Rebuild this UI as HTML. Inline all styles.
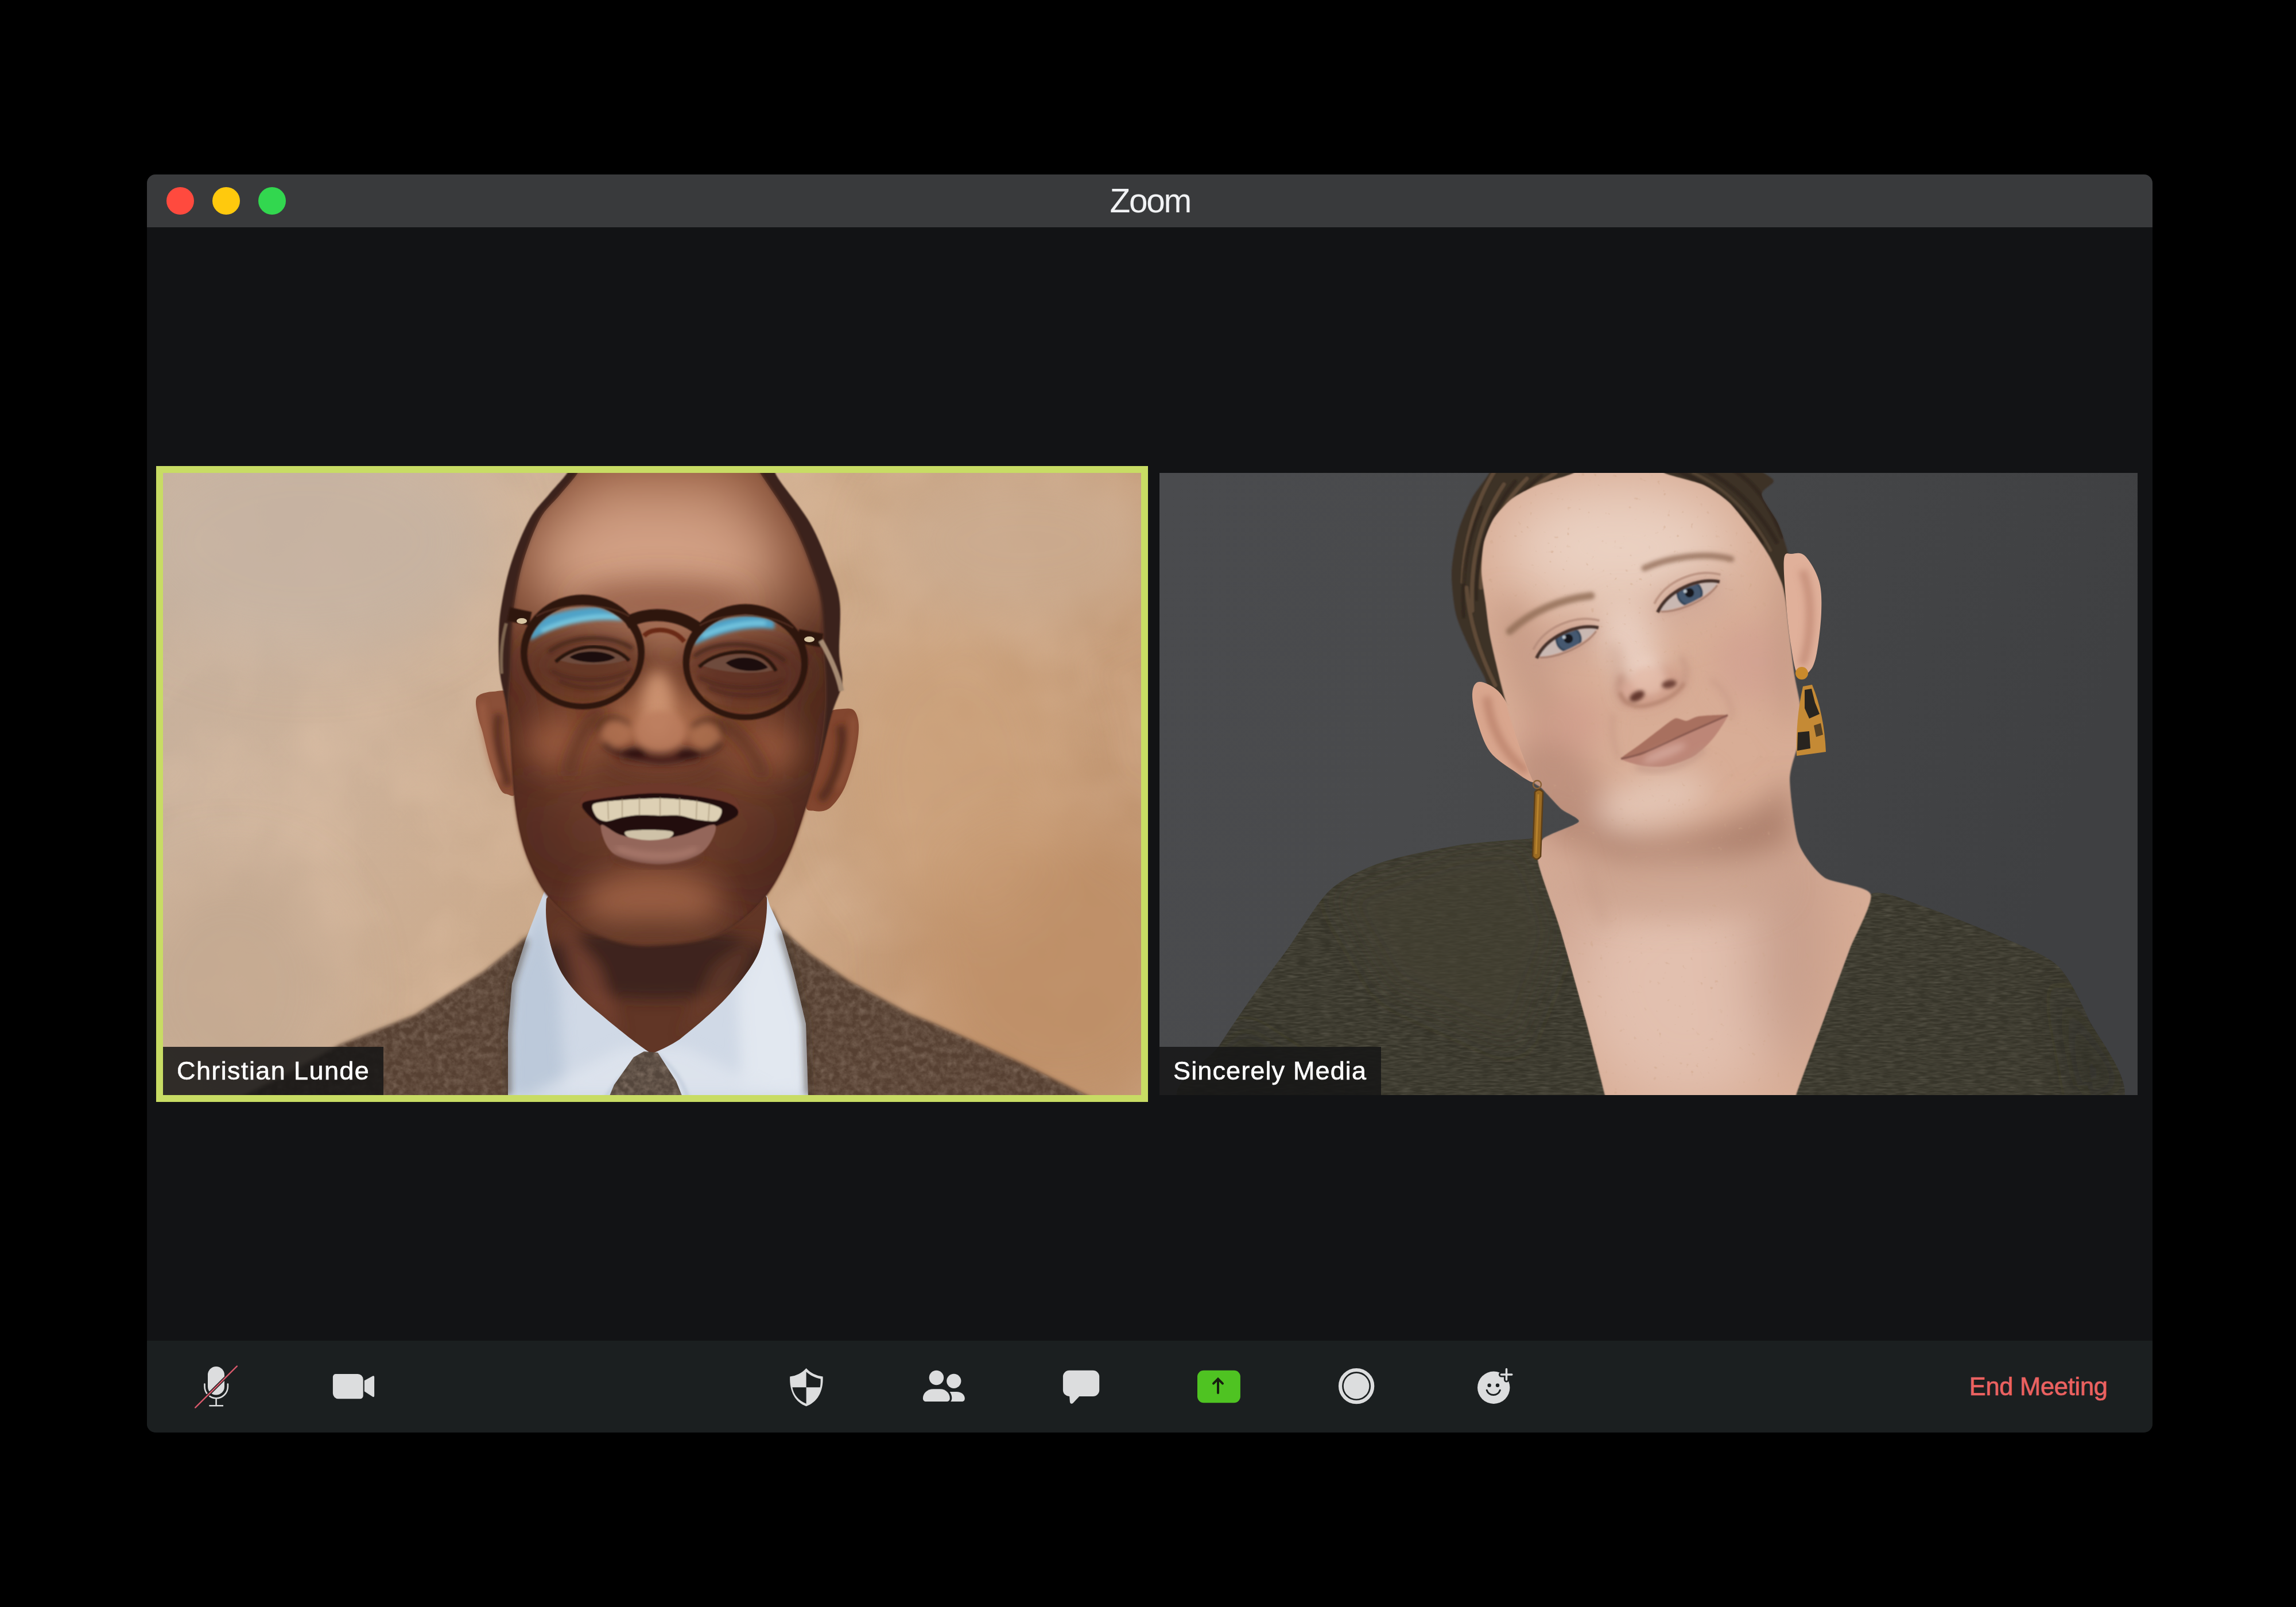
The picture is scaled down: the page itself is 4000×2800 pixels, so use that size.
<!DOCTYPE html>
<html lang="en">
<head>
<meta charset="utf-8">
<title>Zoom</title>
<style>
html,body{margin:0;padding:0;background:#000;}
body{width:4000px;height:2800px;position:relative;overflow:hidden;font-family:"Liberation Sans",sans-serif;}
.win{position:absolute;left:256px;top:304px;width:3494px;height:2192px;background:#121315;border-radius:15px;overflow:hidden;}
.titlebar{position:absolute;left:0;top:0;width:100%;height:92px;background:#393a3c;}
.tl{position:absolute;top:22px;width:48px;height:48px;border-radius:50%;}
.tl.r{left:34px;background:#ff4a3e;}
.tl.y{left:114px;background:#ffc90d;}
.tl.g{left:194px;background:#32d74f;}
.title{position:absolute;left:0;right:0;top:0;height:92px;line-height:92px;text-align:center;color:#f1f2f4;font-size:58.5px;}
.title span{position:absolute;left:1677.5px;top:0px;white-space:nowrap;letter-spacing:-2.3px;}
.tile{position:absolute;overflow:hidden;}
#t1{left:16px;top:508px;width:1704px;height:1084px;border:12px solid #c8dc64;}
#t2{left:1764px;top:520px;width:1704px;height:1084px;}
.tile svg{position:absolute;left:0;top:0;display:block;}
.name{position:absolute;left:0;bottom:0;height:84px;background:rgba(22,22,22,0.86);color:#fff;font-size:45px;line-height:84px;white-space:nowrap;-webkit-text-stroke:0.6px #fff;}
.name span{position:absolute;top:0;left:24px;}
#n1{width:384px;letter-spacing:1.4px;}
#n2{width:386px;letter-spacing:1.13px;}
.toolbar{position:absolute;left:0;top:2032px;width:100%;height:160px;background:#1b1f20;}
.toolbar svg{position:absolute;left:0;top:0;}
.end{position:absolute;top:0;height:160px;line-height:160px;color:#ea6262;font-size:43.5px;letter-spacing:-0.3px;white-space:nowrap;-webkit-text-stroke:0.6px #ea6262;}
</style>
</head>
<body>
<div class="win">
  <div class="titlebar">
    <div class="tl r"></div><div class="tl y"></div><div class="tl g"></div>
    <div class="title"><span id="ztitle">Zoom</span></div>
  </div>

  <div class="tile" id="t1">
    <!--PHOTO1--><svg width="1704" height="1084" viewBox="0 0 1704 1084">
<defs>
<linearGradient id="p1bg" x1="0" y1="0" x2="1" y2="0.35">
<stop offset="0" stop-color="#c5b09d"/><stop offset="0.3" stop-color="#cdb29a"/><stop offset="0.62" stop-color="#cba888"/><stop offset="1" stop-color="#c39874"/>
</linearGradient>
<filter id="b6" x="-20%" y="-20%" width="140%" height="140%"><feGaussianBlur stdDeviation="6"/></filter>
<filter id="b3" x="-20%" y="-20%" width="140%" height="140%"><feGaussianBlur stdDeviation="3"/></filter>
<filter id="b12" x="-30%" y="-30%" width="160%" height="160%"><feGaussianBlur stdDeviation="12"/></filter>
<filter id="b25" x="-50%" y="-50%" width="200%" height="200%"><feGaussianBlur stdDeviation="25"/></filter>
<filter id="b50" x="-50%" y="-50%" width="200%" height="200%"><feGaussianBlur stdDeviation="50"/></filter>
<filter id="b1" x="-5%" y="-5%" width="110%" height="110%"><feGaussianBlur stdDeviation="1.2"/></filter>
<filter id="tweed" x="0" y="0" width="100%" height="100%"><feTurbulence type="fractalNoise" baseFrequency="0.09" numOctaves="3" seed="4" result="n"/><feColorMatrix in="n" type="matrix" values="0 0 0 0 0.5  0 0 0 0 0.39  0 0 0 0 0.31  0.9 0.9 0.9 0 -1.05"/><feComposite in2="SourceGraphic" operator="in"/></filter>
<filter id="wall" x="0" y="0" width="100%" height="100%"><feTurbulence type="fractalNoise" baseFrequency="0.006" numOctaves="3" seed="11" result="n"/><feColorMatrix in="n" type="matrix" values="0 0 0 0 0.86  0 0 0 0 0.62  0 0 0 0 0.45  1.2 1.2 0 0 -0.95"/></filter>
<clipPath id="p1face"><path d="M800.0 -90.0 C759.0 -78.3 747.3 -35.7 734.0 -20.0 C720.7 -4.3 727.3 -6.0 720.0 4.0 C712.7 14.0 700.5 27.3 690.0 40.0 C679.5 52.7 667.3 61.2 657.0 80.0 C646.7 98.8 635.3 129.2 628.0 153.0 C620.7 176.8 616.3 202.0 613.0 223.0 C609.7 244.0 609.2 258.2 608.0 279.0 C606.8 299.8 606.8 327.8 606.0 348.0 C605.2 368.2 603.0 382.5 603.0 400.0 C603.0 417.5 604.5 426.8 606.0 453.0 C607.5 479.2 609.2 527.8 612.0 557.0 C614.8 586.2 618.3 607.3 623.0 628.0 C627.7 648.7 632.5 663.5 640.0 681.0 C647.5 698.5 656.3 717.3 668.0 733.0 C679.7 748.7 697.2 764.0 710.0 775.0 C722.8 786.0 727.8 791.3 745.0 799.0 C762.2 806.7 790.0 817.3 813.0 821.0 C836.0 824.7 859.7 823.0 883.0 821.0 C906.3 819.0 932.8 815.7 953.0 809.0 C973.2 802.3 987.3 793.8 1004.0 781.0 C1020.7 768.2 1038.5 751.7 1053.0 732.0 C1067.5 712.3 1080.0 687.8 1091.0 663.0 C1102.0 638.2 1110.7 610.2 1119.0 583.0 C1127.3 555.8 1135.5 527.2 1141.0 500.0 C1146.5 472.8 1150.0 442.3 1152.0 420.0 C1154.0 397.7 1153.3 383.8 1153.0 366.0 C1152.7 348.2 1151.2 336.3 1150.0 313.0 C1148.8 289.7 1149.3 250.3 1146.0 226.0 C1142.7 201.7 1138.3 190.2 1130.0 167.0 C1121.7 143.8 1111.0 114.8 1096.0 87.0 C1081.0 59.2 1051.3 17.8 1040.0 0.0 C1028.7 -17.8 1038.0 -5.0 1028.0 -20.0 C1018.0 -35.0 1018.0 -78.3 980.0 -90.0 C942.0 -101.7 841.0 -101.7 800.0 -90.0 Z"/></clipPath>
<clipPath id="p1shirt"><path d="M664.0 730.0 L632.0 813.0 L608.0 890.0 L601.0 977.0 L601.0 1090.0 L1124.0 1090.0 L1120.0 960.0 L1099.0 872.0 L1078.0 799.0 L1057.0 754.0 L1050.0 730.0 Z"/></clipPath>
<clipPath id="p1neck"><path d="M700 700 L668 742 C664 780 672 830 695 872 C715 905 740 925 761 942 C800 975 830 998 848 1010 L856 1010 C870 1004 885 997 900 987 C940 955 968 930 988 907 C1015 875 1035 850 1043 820 C1050 790 1053 765 1052 740 L1020 700 Z"/></clipPath>
<clipPath id="p1ll"><ellipse cx="731" cy="315" rx="98" ry="84"/></clipPath>
<clipPath id="p1rl"><ellipse cx="1014.6" cy="332" rx="99" ry="85"/></clipPath>
</defs>
<rect width="1704" height="1084" fill="url(#p1bg)"/>
<rect width="1704" height="1084" filter="url(#wall)" opacity="0.35"/>
<g filter="url(#b50)">
<ellipse cx="250" cy="120" rx="320" ry="200" fill="#c6b3a3" opacity="0.8"/>
<ellipse cx="1560" cy="860" rx="260" ry="260" fill="#bd8d66" opacity="0.8"/>
<ellipse cx="1380" cy="520" rx="200" ry="260" fill="#cda27c" opacity="0.6"/>
<ellipse cx="120" cy="900" rx="200" ry="220" fill="#c2a68f" opacity="0.7"/>
<ellipse cx="1500" cy="120" rx="240" ry="140" fill="#ccae94" opacity="0.7"/>
</g>
<g>
<path id="p1jk" d="M120.0 1096.0 L230.0 1040.0 L309.0 996.0 L440.0 944.0 L560.0 868.0 L635.0 808.0 L650.0 790.0 L700.0 900.0 L700.0 1090.0 Z M1060.0 760.0 L1078.0 796.0 L1127.0 838.0 L1197.0 886.0 L1300.0 942.0 L1342.0 959.0 L1493.0 1027.0 L1620.0 1090.0 L1000.0 1090.0 L1000.0 900.0 Z" fill="#563f30" filter="url(#b3)"/>
<path d="M120.0 1096.0 L230.0 1040.0 L309.0 996.0 L440.0 944.0 L560.0 868.0 L635.0 808.0 L650.0 790.0 L700.0 900.0 L700.0 1090.0 Z M1060.0 760.0 L1078.0 796.0 L1127.0 838.0 L1197.0 886.0 L1300.0 942.0 L1342.0 959.0 L1493.0 1027.0 L1620.0 1090.0 L1000.0 1090.0 L1000.0 900.0 Z" fill="#fff" filter="url(#tweed)" opacity="0.32"/>
</g>
<path d="M664.0 730.0 L632.0 813.0 L608.0 890.0 L601.0 977.0 L601.0 1090.0 L1124.0 1090.0 L1120.0 960.0 L1099.0 872.0 L1078.0 799.0 L1057.0 754.0 L1050.0 730.0 Z" fill="#d0d9e6"/>
<g clip-path="url(#p1shirt)"><g filter="url(#b12)"><path d="M660 740 L608 890 L601 1084 L700 1084 L690 900 Z" fill="#b9c6d8" opacity="0.9"/><path d="M1054 740 L1120 960 L1124 1084 L1010 1084 L1000 900 Z" fill="#e3e9f1" opacity="0.9"/><path d="M640 1084 L800 1000 L910 1000 L1080 1084 Z" fill="#dfe5ee" opacity="0.8"/></g></g>
<g filter="url(#b3)" fill="none" stroke="#aab8cc" stroke-width="4" opacity="0.7"><path d="M845 1012 C810 1040 790 1060 770 1090"/><path d="M858 1012 C890 1035 905 1060 915 1090"/></g>
<g filter="url(#b6)"><path d="M632 813 L608 890 L601 977 L601 1084" stroke="#3f3127" stroke-width="10" fill="none" opacity="0.6"/><path d="M1078 799 L1099 872 L1120 960 L1124 1084" stroke="#3f3127" stroke-width="10" fill="none" opacity="0.6"/></g>
<path d="M700 700 L668 742 C664 780 672 830 695 872 C715 905 740 925 761 942 C800 975 830 998 848 1010 L856 1010 C870 1004 885 997 900 987 C940 955 968 930 988 907 C1015 875 1035 850 1043 820 C1050 790 1053 765 1052 740 L1020 700 Z" fill="#613626"/>
<g clip-path="url(#p1neck)"><g filter="url(#b12)"><ellipse cx="860" cy="855" rx="215" ry="62" fill="#3b2320" opacity="0.95"/><path d="M690 780 L720 900 L800 980 L760 860 Z" fill="#7b4632" opacity="0.8"/><path d="M1040 800 L990 900 L900 985 L960 860 Z" fill="#6f3f2e" opacity="0.6"/></g></g>
<path d="M838.0 1008.0 L862.0 1010.0 L894.0 1060.0 L906.0 1090.0 L776.0 1090.0 L786.0 1066.0 L820.0 1018.0 Z" fill="#54463c"/>
<path d="M838.0 1008.0 L862.0 1010.0 L894.0 1060.0 L906.0 1090.0 L776.0 1090.0 L786.0 1066.0 L820.0 1018.0 Z" fill="#fff" filter="url(#tweed)" opacity="0.4"/>
<path d="M603.0 385.0 C597.8 375.2 583.7 380.7 575.0 381.0 C566.3 381.3 556.0 383.8 551.0 387.0 C546.0 390.2 545.2 392.8 545.0 400.0 C544.8 407.2 548.0 421.2 550.0 430.0 C552.0 438.8 553.7 440.5 557.0 453.0 C560.3 465.5 565.0 488.8 570.0 505.0 C575.0 521.2 582.0 540.8 587.0 550.0 C592.0 559.2 595.5 558.8 600.0 560.0 C604.5 561.2 612.3 567.0 614.0 557.0 C615.7 547.0 611.3 519.5 610.0 500.0 C608.7 480.5 607.2 459.2 606.0 440.0 C604.8 420.8 608.2 394.8 603.0 385.0 Z" fill="#8a4f38"/>
<path d="M1160.0 418.0 C1165.5 411.5 1177.7 411.7 1185.0 411.0 C1192.3 410.3 1199.5 409.3 1204.0 414.0 C1208.5 418.7 1211.3 428.0 1212.0 439.0 C1212.7 450.0 1210.5 466.2 1208.0 480.0 C1205.5 493.8 1201.2 509.2 1197.0 522.0 C1192.8 534.8 1189.2 546.5 1183.0 557.0 C1176.8 567.5 1168.0 579.7 1160.0 585.0 C1152.0 590.3 1141.7 590.2 1135.0 589.0 C1128.3 587.8 1119.5 591.2 1120.0 578.0 C1120.5 564.8 1132.7 531.3 1138.0 510.0 C1143.3 488.7 1148.3 465.3 1152.0 450.0 C1155.7 434.7 1154.5 424.5 1160.0 418.0 Z" fill="#82462f"/>
<g filter="url(#b6)"><path d="M585 420 C578 460 590 510 602 545" stroke="#4e261c" stroke-width="14" fill="none" opacity="0.8"/><path d="M1180 440 C1190 480 1170 540 1145 570" stroke="#4a241b" stroke-width="16" fill="none" opacity="0.8"/><path d="M556 400 C556 440 568 490 584 535" stroke="#a9674a" stroke-width="8" fill="none" opacity="0.8"/><path d="M1202 425 C1206 460 1196 510 1175 550" stroke="#9b5b40" stroke-width="8" fill="none" opacity="0.7"/></g>
<path d="M780.0 -90.0 C732.7 -78.3 728.8 -35.3 716.0 -20.0 C703.2 -4.7 710.3 -7.7 703.0 2.0 C695.7 11.7 682.7 25.0 672.0 38.0 C661.3 51.0 649.7 60.8 639.0 80.0 C628.3 99.2 616.0 129.2 608.0 153.0 C600.0 176.8 594.8 202.0 591.0 223.0 C587.2 244.0 585.7 258.2 585.0 279.0 C584.3 299.8 585.0 327.8 587.0 348.0 C589.0 368.2 594.2 382.5 597.0 400.0 C599.8 417.5 601.7 426.8 604.0 453.0 C606.3 479.2 608.0 527.8 611.0 557.0 C614.0 586.2 617.3 607.3 622.0 628.0 C626.7 648.7 631.5 663.5 639.0 681.0 C646.5 698.5 655.3 717.3 667.0 733.0 C678.7 748.7 696.2 764.0 709.0 775.0 C721.8 786.0 726.7 791.2 744.0 799.0 C761.3 806.8 789.8 818.2 813.0 822.0 C836.2 825.8 859.7 824.0 883.0 822.0 C906.3 820.0 932.7 816.7 953.0 810.0 C973.3 803.3 988.2 794.8 1005.0 782.0 C1021.8 769.2 1039.5 752.8 1054.0 733.0 C1068.5 713.2 1081.0 688.0 1092.0 663.0 C1103.0 638.0 1111.2 610.2 1120.0 583.0 C1128.8 555.8 1137.5 527.2 1145.0 500.0 C1152.5 472.8 1158.7 442.3 1165.0 420.0 C1171.3 397.7 1180.8 383.8 1183.0 366.0 C1185.2 348.2 1178.7 336.3 1178.0 313.0 C1177.3 289.7 1181.7 250.3 1179.0 226.0 C1176.3 201.7 1170.7 190.2 1162.0 167.0 C1153.3 143.8 1142.0 113.2 1127.0 87.0 C1112.0 60.8 1083.5 27.8 1072.0 10.0 C1060.5 -7.8 1070.0 -3.3 1058.0 -20.0 C1046.0 -36.7 1046.3 -78.3 1000.0 -90.0 C953.7 -101.7 827.3 -101.7 780.0 -90.0 Z" fill="#3b241b" filter="url(#b1)"/>
<path d="M800.0 -90.0 C759.0 -78.3 747.3 -35.7 734.0 -20.0 C720.7 -4.3 727.3 -6.0 720.0 4.0 C712.7 14.0 700.5 27.3 690.0 40.0 C679.5 52.7 667.3 61.2 657.0 80.0 C646.7 98.8 635.3 129.2 628.0 153.0 C620.7 176.8 616.3 202.0 613.0 223.0 C609.7 244.0 609.2 258.2 608.0 279.0 C606.8 299.8 606.8 327.8 606.0 348.0 C605.2 368.2 603.0 382.5 603.0 400.0 C603.0 417.5 604.5 426.8 606.0 453.0 C607.5 479.2 609.2 527.8 612.0 557.0 C614.8 586.2 618.3 607.3 623.0 628.0 C627.7 648.7 632.5 663.5 640.0 681.0 C647.5 698.5 656.3 717.3 668.0 733.0 C679.7 748.7 697.2 764.0 710.0 775.0 C722.8 786.0 727.8 791.3 745.0 799.0 C762.2 806.7 790.0 817.3 813.0 821.0 C836.0 824.7 859.7 823.0 883.0 821.0 C906.3 819.0 932.8 815.7 953.0 809.0 C973.2 802.3 987.3 793.8 1004.0 781.0 C1020.7 768.2 1038.5 751.7 1053.0 732.0 C1067.5 712.3 1080.0 687.8 1091.0 663.0 C1102.0 638.2 1110.7 610.2 1119.0 583.0 C1127.3 555.8 1135.5 527.2 1141.0 500.0 C1146.5 472.8 1150.0 442.3 1152.0 420.0 C1154.0 397.7 1153.3 383.8 1153.0 366.0 C1152.7 348.2 1151.2 336.3 1150.0 313.0 C1148.8 289.7 1149.3 250.3 1146.0 226.0 C1142.7 201.7 1138.3 190.2 1130.0 167.0 C1121.7 143.8 1111.0 114.8 1096.0 87.0 C1081.0 59.2 1051.3 17.8 1040.0 0.0 C1028.7 -17.8 1038.0 -5.0 1028.0 -20.0 C1018.0 -35.0 1018.0 -78.3 980.0 -90.0 C942.0 -101.7 841.0 -101.7 800.0 -90.0 Z" fill="#7a452e" filter="url(#b3)"/>
<g clip-path="url(#p1face)">
<g filter="url(#b50)">
<ellipse cx="860" cy="150" rx="230" ry="130" fill="#cf9c80"/><ellipse cx="850" cy="140" rx="120" ry="70" fill="#d2a085"/>
<ellipse cx="880" cy="0" rx="200" ry="40" fill="#a56a4c"/>
<ellipse cx="600" cy="520" rx="60" ry="260" fill="#4f281d"/>
<ellipse cx="1150" cy="500" rx="70" ry="280" fill="#4a251b"/>
<ellipse cx="700" cy="680" rx="90" ry="120" fill="#4f281d" opacity="0.95"/>
<ellipse cx="1040" cy="690" rx="90" ry="120" fill="#4a241a" opacity="0.95"/><ellipse cx="866" cy="600" rx="220" ry="120" fill="#6a3a28" opacity="0.7"/>
</g>
<g filter="url(#b25)">
<ellipse cx="735" cy="335" rx="110" ry="60" fill="#5e3024" opacity="0.75"/>
<ellipse cx="1015" cy="350" rx="110" ry="60" fill="#5a2d22" opacity="0.75"/>
<ellipse cx="868" cy="225" rx="150" ry="40" fill="#8a513a" opacity="0.7"/>
<ellipse cx="866" cy="440" rx="95" ry="60" fill="#a86a4b"/>
<ellipse cx="690" cy="470" rx="60" ry="45" fill="#98593f" opacity="0.9"/>
<ellipse cx="1050" cy="480" rx="60" ry="45" fill="#94553c" opacity="0.9"/>
<ellipse cx="850" cy="745" rx="120" ry="45" fill="#9c6044" opacity="0.95"/>
<ellipse cx="866" cy="520" rx="120" ry="22" fill="#5b2d22" opacity="0.8"/>
<ellipse cx="860" cy="800" rx="170" ry="22" fill="#4a2a22" opacity="0.8"/>
</g>
<g filter="url(#b12)">
<ellipse cx="862" cy="405" rx="28" ry="60" fill="#cf9674" opacity="0.9"/>
<ellipse cx="866" cy="492" rx="80" ry="12" fill="#3f1d17" opacity="0.8"/>
<path d="M765 411 C735 440 712 480 706 528" stroke="#4d261d" stroke-width="16" fill="none" opacity="0.8"/>
<path d="M970 428 C1005 455 1035 490 1046 530" stroke="#4a241b" stroke-width="16" fill="none" opacity="0.8"/>
</g>
</g>
<g filter="url(#b6)">
<path d="M760 452 C756 425 790 418 812 440" stroke="#4e271d" stroke-width="9" fill="none" opacity="0.75"/>
<path d="M974 458 C980 430 944 420 922 444" stroke="#4e271d" stroke-width="9" fill="none" opacity="0.75"/>
<ellipse cx="790" cy="455" rx="26" ry="22" fill="#b07252" opacity="0.8"/>
<ellipse cx="945" cy="460" rx="26" ry="22" fill="#ad6f50" opacity="0.8"/>
<ellipse cx="866" cy="450" rx="44" ry="36" fill="#bb7d5d" opacity="0.85"/>
<path d="M768 470 C790 496 826 492 846 498 C866 504 890 500 910 494 C940 488 962 486 972 468" stroke="#3a1a15" stroke-width="10" fill="none" opacity="0.85"/>
<ellipse cx="822" cy="488" rx="20" ry="8" fill="#2a110e" opacity="0.9"/>
<ellipse cx="915" cy="490" rx="20" ry="8" fill="#2a110e" opacity="0.9"/>
</g>
<g filter="url(#b1)">
<path d="M727.0 580.0 C724.0 576.7 729.8 561.7 742.0 556.0 C754.2 550.3 779.3 548.5 800.0 546.0 C820.7 543.5 844.3 540.7 866.0 541.0 C887.7 541.3 909.7 544.8 930.0 548.0 C950.3 551.2 975.5 552.3 988.0 560.0 C1000.5 567.7 1007.2 589.8 1005.0 594.0 C1002.8 598.2 987.5 588.2 975.0 585.0 C962.5 581.8 948.2 577.8 930.0 575.0 C911.8 572.2 887.7 568.5 866.0 568.0 C844.3 567.5 817.7 570.7 800.0 572.0 C782.3 573.3 772.2 574.7 760.0 576.0 C747.8 577.3 730.0 583.3 727.0 580.0 Z" fill="#6d382c"/>
<path d="M730.0 580.0 C729.5 572.2 737.3 571.7 760.0 568.0 C782.7 564.3 830.2 557.3 866.0 558.0 C901.8 558.7 952.3 566.0 975.0 572.0 C997.7 578.0 1004.2 586.7 1002.0 594.0 C999.8 601.3 978.2 609.7 962.0 616.0 C945.8 622.3 924.0 628.0 905.0 632.0 C886.0 636.0 865.8 640.0 848.0 640.0 C830.2 640.0 812.2 636.2 798.0 632.0 C783.8 627.8 774.3 623.7 763.0 615.0 C751.7 606.3 730.5 587.8 730.0 580.0 Z" fill="#241010"/>
<path d="M750.0 577.0 C756.0 573.1 784.5 571.3 800.0 570.0 C815.5 568.7 848.7 566.7 866.0 567.0 C883.3 567.3 915.9 569.6 930.0 572.0 C944.1 574.4 967.5 580.5 972.0 585.0 C976.5 589.5 969.6 603.5 964.0 606.0 C958.4 608.5 938.5 605.2 930.0 604.0 C921.5 602.8 908.5 597.9 900.0 597.0 C891.5 596.1 875.3 597.1 866.0 597.0 C856.7 596.9 838.8 595.6 830.0 596.0 C821.2 596.4 807.7 598.5 800.0 600.0 C792.3 601.5 778.0 607.1 772.0 607.0 C766.0 606.9 757.9 603.0 755.0 599.0 C752.1 595.0 744.0 580.9 750.0 577.0 Z" fill="#ddd0b4"/>
<path d="M806.0 625.0 C811.2 622.5 832.5 622.0 846.0 622.0 C859.5 622.0 881.3 622.5 887.0 625.0 C892.7 627.5 886.5 634.2 880.0 637.0 C873.5 639.8 858.8 642.0 848.0 642.0 C837.2 642.0 822.0 639.8 815.0 637.0 C808.0 634.2 800.8 627.5 806.0 625.0 Z" fill="#cfc2a8"/>
<path d="M763.0 614.0 C765.0 608.5 783.8 626.7 798.0 631.0 C812.2 635.3 830.2 640.0 848.0 640.0 C865.8 640.0 886.0 635.3 905.0 631.0 C924.0 626.7 956.5 608.8 962.0 614.0 C967.5 619.2 954.0 650.7 938.0 662.0 C922.0 673.3 891.3 681.7 866.0 682.0 C840.7 682.3 803.2 675.3 786.0 664.0 C768.8 652.7 761.0 619.5 763.0 614.0 Z" fill="#94665a"/>
<g stroke="#9c8a6e" stroke-width="1.6" fill="none" opacity="0.8"><path d="M775 571 L776 604 M800 568 L800 600 M830 566 L830 597 M866 565 L866 598 M900 566 L900 598 M930 570 L929 603 M952 576 L950 606"/></g>
</g>
<g filter="url(#b6)"><path d="M790 655 C840 672 900 672 930 655" stroke="#b58375" stroke-width="10" fill="none" opacity="0.7"/><path d="M786 668 C840 692 900 690 938 668" stroke="#5a3127" stroke-width="9" fill="none" opacity="0.7"/></g>
<g filter="url(#b1)">
<path d="M690 326 C706 314 730 306 752 307 C778 308 796 316 806 326 C790 332 770 334 748 334 C722 334 704 331 690 326 Z" fill="#6e4c3d"/>
<path d="M708 321 C724 308 770 307 788 322 C772 333 726 333 708 321 Z" fill="#1f100d"/>
<path d="M684 329 C704 311 730 302 752 303 C780 304 800 314 812 327" stroke="#2a140f" stroke-width="6" fill="none"/>
<path d="M940 336 C958 323 985 315 1012 316 C1036 317 1052 327 1062 344 C1046 348 1026 349 1004 348 C978 346 958 342 940 336 Z" fill="#6e4c3d"/>
<path d="M980 331 C998 317 1038 318 1054 339 C1036 349 998 347 980 331 Z" fill="#1f100d"/>
<path d="M934 338 C954 319 985 311 1012 312 C1040 313 1058 325 1068 345" stroke="#2a140f" stroke-width="6" fill="none"/>
</g>
<g filter="url(#b3)">
<path d="M672 312 C710 282 780 280 818 306" stroke="#3d1d16" stroke-width="6" fill="none" opacity="0.85"/>
<path d="M925 320 C960 290 1040 290 1084 328" stroke="#3d1d16" stroke-width="6" fill="none" opacity="0.85"/>
<path d="M676 344 C710 366 780 366 816 344 M690 362 C725 380 775 378 806 360" stroke="#47231a" stroke-width="5" fill="none" opacity="0.75"/>
<path d="M934 356 C975 378 1040 380 1080 362 M950 374 C990 392 1040 392 1074 378" stroke="#47231a" stroke-width="5" fill="none" opacity="0.75"/>
</g>
<g filter="url(#b3)"><g clip-path="url(#p1ll)"><path d="M640 292 C690 262 760 248 830 262 L830 240 C760 226 690 236 640 262 Z" fill="#4fa3c8"/><path d="M660 276 C700 256 760 246 800 252" stroke="#7fd0e6" stroke-width="8" fill="none" opacity="0.8"/></g>
<g clip-path="url(#p1rl)"><path d="M925 300 C970 278 1020 266 1065 272 L1065 250 C1020 244 970 252 925 274 Z" fill="#4fa3c8"/><path d="M940 284 C980 266 1020 260 1050 262" stroke="#7fd0e6" stroke-width="7" fill="none" opacity="0.8"/></g></g>
<g filter="url(#b1)">
<path fill="#2e1610" fill-rule="evenodd" d="M623 312 a108 100 0 1 0 216 0 a108 100 0 1 0 -216 0 Z M634.5 316 a96.5 86 0 1 0 193 0 a96.5 86 0 1 0 -193 0 Z"/>
<path fill="#2e1610" fill-rule="evenodd" d="M905.6 329.6 a109 101 0 1 0 218 0 a109 101 0 1 0 -218 0 Z M917 333.6 a97.6 87 0 1 0 195.2 0 a97.6 87 0 1 0 -195.2 0 Z"/>
<g fill="none" stroke="#2e1610">
<path d="M806 262 C842 240 902 242 940 278" stroke-width="21"/>
<path d="M838 284 C852 268 890 270 908 294" stroke-width="8" stroke="#6b2a18"/>
<path d="M602 246 L640 254" stroke-width="24"/>
<path d="M1106 284 L1148 292" stroke-width="24"/>
<path d="M1146 292 C1162 320 1176 350 1182 380" stroke="#a58a72" stroke-width="9"/>
<path d="M598 262 C590 290 588 320 590 350" stroke="#7d6550" stroke-width="6"/>
<path d="M650 250 C690 226 770 224 812 250" stroke="#5a3524" stroke-width="3" opacity="0.7"/>
<path d="M935 266 C975 242 1055 242 1098 270" stroke="#5a3524" stroke-width="3" opacity="0.7"/>
<path d="M660 372 C690 402 770 404 802 374" stroke="#6a3a22" stroke-width="5" opacity="0.6"/>
<path d="M942 390 C975 420 1055 422 1088 390" stroke="#6a3a22" stroke-width="5" opacity="0.6"/>
</g></g>
<ellipse cx="625" cy="258" rx="9" ry="5" fill="#d9c7a4"/><ellipse cx="1126" cy="290" rx="9" ry="5" fill="#d9c7a4"/>
</svg><!--/PHOTO1-->
    <div class="name" id="n1"><span id="n1s">Christian Lunde</span></div>
  </div>
  <div class="tile" id="t2">
    <!--PHOTO2--><svg width="1704" height="1084" viewBox="0 0 1704 1084">
<defs>
<linearGradient id="p2bg" x1="0" y1="0" x2="1" y2="0.2">
<stop offset="0" stop-color="#4a4b4e"/><stop offset="0.35" stop-color="#494a4c"/><stop offset="1" stop-color="#3f4042"/>
</linearGradient>
<filter id="c1" x="-5%" y="-5%" width="110%" height="110%"><feGaussianBlur stdDeviation="1.2"/></filter>
<filter id="c3" x="-20%" y="-20%" width="140%" height="140%"><feGaussianBlur stdDeviation="3"/></filter>
<filter id="c6" x="-20%" y="-20%" width="140%" height="140%"><feGaussianBlur stdDeviation="6"/></filter>
<filter id="c12" x="-30%" y="-30%" width="160%" height="160%"><feGaussianBlur stdDeviation="12"/></filter>
<filter id="c25" x="-50%" y="-50%" width="200%" height="200%"><feGaussianBlur stdDeviation="25"/></filter>
<filter id="c50" x="-50%" y="-50%" width="200%" height="200%"><feGaussianBlur stdDeviation="50"/></filter>
<filter id="linen" x="0" y="0" width="100%" height="100%"><feTurbulence type="fractalNoise" baseFrequency="0.05 0.3" numOctaves="2" seed="7" result="n"/><feColorMatrix in="n" type="matrix" values="0 0 0 0 0.45  0 0 0 0 0.42  0 0 0 0 0.33  1 1 1 0 -1.2"/><feComposite in2="SourceGraphic" operator="in"/></filter>
<filter id="frk" x="0" y="0" width="100%" height="100%"><feTurbulence type="fractalNoise" baseFrequency="0.12" numOctaves="2" seed="3" result="n"/><feColorMatrix in="n" type="matrix" values="0 0 0 0 0.62  0 0 0 0 0.38  0 0 0 0 0.25  2.2 2.2 2.2 0 -4.15"/><feComposite in2="SourceGraphic" operator="in"/></filter>
<clipPath id="p2hair"><path d="M620.0 -80.0 C563.7 -72.0 584.0 -30.7 578.0 -20.0 C572.0 -9.3 579.5 -8.7 575.0 0.0 C570.5 8.7 551.3 31.1 544.0 45.0 C536.7 58.9 524.7 86.8 520.0 104.0 C515.3 121.2 509.5 155.3 509.0 174.0 C508.5 192.7 512.3 227.5 516.0 244.0 C519.7 260.5 530.5 283.5 537.0 298.0 C543.5 312.5 557.9 339.4 565.0 353.0 C572.1 366.6 572.0 391.1 590.0 400.0 C608.0 408.9 658.7 433.3 700.0 420.0 C741.3 406.7 849.3 321.3 900.0 300.0 C950.7 278.7 1053.9 279.1 1080.0 260.0 C1106.1 240.9 1094.1 173.5 1096.0 157.0 C1097.9 140.5 1096.5 145.3 1094.0 136.0 C1091.5 126.7 1083.0 100.1 1077.0 87.0 C1071.0 73.9 1049.9 47.7 1049.0 38.0 C1048.1 28.3 1070.5 19.7 1070.0 14.0 C1069.5 8.3 1049.0 -0.5 1045.0 -5.0 C1041.0 -9.5 1046.0 -10.0 1040.0 -20.0 C1034.0 -30.0 1056.0 -72.0 1000.0 -80.0 C944.0 -88.0 676.3 -88.0 620.0 -80.0 Z"/></clipPath>
<clipPath id="p2dress"><path d="M40.0 1100.0 C0.5 1073.1 88.0 1022.7 104.0 998.0 C120.0 973.3 144.3 937.3 160.0 915.0 C175.7 892.7 203.7 856.1 222.0 831.0 C240.3 805.9 275.1 747.3 297.0 727.0 C318.9 706.7 356.3 689.4 386.0 679.0 C415.7 668.6 486.4 654.5 520.0 649.0 C553.6 643.5 618.3 639.5 638.0 638.0 C657.7 636.5 665.1 632.5 668.0 638.0 C670.9 643.5 656.0 658.2 660.0 679.0 C664.0 699.8 687.1 757.9 698.0 794.0 C708.9 830.1 731.2 909.2 742.0 950.0 C752.8 990.8 824.6 1066.7 779.0 1100.0 C733.4 1133.3 498.5 1200.0 400.0 1200.0 C301.5 1200.0 79.5 1126.9 40.0 1100.0 Z M1106.0 1100.0 C1073.7 1066.7 1145.2 985.9 1158.0 950.0 C1170.8 914.1 1191.2 859.8 1202.0 831.0 C1212.8 802.2 1221.1 743.9 1239.0 734.0 C1256.9 724.1 1303.3 746.1 1336.0 757.0 C1368.7 767.9 1453.3 802.3 1484.0 816.0 C1514.7 829.7 1548.1 842.1 1566.0 860.0 C1583.9 877.9 1603.5 918.0 1618.0 950.0 C1632.5 982.0 1704.1 1066.7 1675.0 1100.0 C1645.9 1133.3 1475.9 1200.0 1400.0 1200.0 C1324.1 1200.0 1138.3 1133.3 1106.0 1100.0 Z"/></clipPath>
<clipPath id="p2skin"><path d="M780.0 -80.0 C768.3 -73.0 736.8 -29.3 730.0 -20.0 C723.2 -10.7 730.3 -4.8 722.0 0.0 C713.7 4.8 671.6 15.8 659.0 21.0 C646.4 26.2 623.0 38.1 614.0 45.0 C605.0 51.9 587.7 71.0 582.0 80.0 C576.3 89.0 567.5 111.0 565.0 122.0 C562.5 133.0 560.6 161.9 561.0 174.0 C561.4 186.1 566.4 213.6 568.0 226.0 C569.6 238.4 572.9 267.9 575.0 280.0 C577.1 292.1 583.5 319.3 586.0 330.0 C588.5 340.7 593.0 360.3 596.0 372.0 C599.0 383.7 607.8 416.2 612.0 430.0 C616.2 443.8 627.5 477.5 632.0 490.0 C636.5 502.5 647.0 530.1 651.0 537.0 C655.0 543.9 660.3 543.4 666.0 549.0 C671.7 554.6 692.4 578.1 700.0 585.0 C707.6 591.9 734.7 601.8 731.0 608.0 C727.3 614.2 676.3 629.7 668.0 638.0 C659.7 646.3 656.5 660.8 660.0 679.0 C663.5 697.2 688.4 762.4 698.0 794.0 C707.6 825.6 732.9 916.2 742.0 950.0 C751.1 983.8 770.2 1060.7 776.0 1084.0 C781.8 1107.3 754.9 1142.3 792.0 1150.0 C829.1 1157.7 1057.0 1157.7 1094.0 1150.0 C1131.0 1142.3 1101.5 1107.3 1109.0 1084.0 C1116.5 1060.7 1147.2 979.5 1158.0 950.0 C1168.8 920.5 1192.5 856.2 1202.0 831.0 C1211.5 805.8 1244.1 748.7 1239.0 734.0 C1233.9 719.3 1172.7 715.4 1158.0 705.0 C1143.3 694.6 1120.0 665.0 1113.0 645.0 C1106.0 625.0 1098.0 554.4 1098.0 534.0 C1098.0 513.6 1110.8 484.2 1113.0 470.0 C1115.2 455.8 1117.8 425.6 1117.0 412.0 C1116.2 398.4 1108.5 369.1 1106.0 353.0 C1103.5 336.9 1097.8 288.8 1096.0 274.0 C1094.2 259.2 1092.4 235.6 1091.0 226.0 C1089.6 216.4 1087.3 201.3 1084.0 192.0 C1080.7 182.7 1068.7 156.3 1063.0 146.0 C1057.3 135.7 1043.2 115.0 1035.0 104.0 C1026.8 93.0 1003.1 61.7 993.0 52.0 C982.9 42.3 961.3 27.1 948.0 21.0 C934.7 14.9 888.1 4.8 879.0 0.0 C869.9 -4.8 875.7 -10.7 870.0 -20.0 C864.3 -29.3 840.5 -73.0 830.0 -80.0 C819.5 -87.0 791.7 -87.0 780.0 -80.0 Z"/></clipPath>
</defs>
<rect width="1704" height="1084" fill="url(#p2bg)"/>
<path d="M40.0 1100.0 C0.5 1073.1 88.0 1022.7 104.0 998.0 C120.0 973.3 144.3 937.3 160.0 915.0 C175.7 892.7 203.7 856.1 222.0 831.0 C240.3 805.9 275.1 747.3 297.0 727.0 C318.9 706.7 356.3 689.4 386.0 679.0 C415.7 668.6 486.4 654.5 520.0 649.0 C553.6 643.5 618.3 639.5 638.0 638.0 C657.7 636.5 665.1 632.5 668.0 638.0 C670.9 643.5 656.0 658.2 660.0 679.0 C664.0 699.8 687.1 757.9 698.0 794.0 C708.9 830.1 731.2 909.2 742.0 950.0 C752.8 990.8 824.6 1066.7 779.0 1100.0 C733.4 1133.3 498.5 1200.0 400.0 1200.0 C301.5 1200.0 79.5 1126.9 40.0 1100.0 Z M1106.0 1100.0 C1073.7 1066.7 1145.2 985.9 1158.0 950.0 C1170.8 914.1 1191.2 859.8 1202.0 831.0 C1212.8 802.2 1221.1 743.9 1239.0 734.0 C1256.9 724.1 1303.3 746.1 1336.0 757.0 C1368.7 767.9 1453.3 802.3 1484.0 816.0 C1514.7 829.7 1548.1 842.1 1566.0 860.0 C1583.9 877.9 1603.5 918.0 1618.0 950.0 C1632.5 982.0 1704.1 1066.7 1675.0 1100.0 C1645.9 1133.3 1475.9 1200.0 1400.0 1200.0 C1324.1 1200.0 1138.3 1133.3 1106.0 1100.0 Z" fill="#37352a"/>
<path d="M40.0 1100.0 C0.5 1073.1 88.0 1022.7 104.0 998.0 C120.0 973.3 144.3 937.3 160.0 915.0 C175.7 892.7 203.7 856.1 222.0 831.0 C240.3 805.9 275.1 747.3 297.0 727.0 C318.9 706.7 356.3 689.4 386.0 679.0 C415.7 668.6 486.4 654.5 520.0 649.0 C553.6 643.5 618.3 639.5 638.0 638.0 C657.7 636.5 665.1 632.5 668.0 638.0 C670.9 643.5 656.0 658.2 660.0 679.0 C664.0 699.8 687.1 757.9 698.0 794.0 C708.9 830.1 731.2 909.2 742.0 950.0 C752.8 990.8 824.6 1066.7 779.0 1100.0 C733.4 1133.3 498.5 1200.0 400.0 1200.0 C301.5 1200.0 79.5 1126.9 40.0 1100.0 Z M1106.0 1100.0 C1073.7 1066.7 1145.2 985.9 1158.0 950.0 C1170.8 914.1 1191.2 859.8 1202.0 831.0 C1212.8 802.2 1221.1 743.9 1239.0 734.0 C1256.9 724.1 1303.3 746.1 1336.0 757.0 C1368.7 767.9 1453.3 802.3 1484.0 816.0 C1514.7 829.7 1548.1 842.1 1566.0 860.0 C1583.9 877.9 1603.5 918.0 1618.0 950.0 C1632.5 982.0 1704.1 1066.7 1675.0 1100.0 C1645.9 1133.3 1475.9 1200.0 1400.0 1200.0 C1324.1 1200.0 1138.3 1133.3 1106.0 1100.0 Z" fill="#fff" filter="url(#linen)" opacity="0.22"/>
<g clip-path="url(#p2dress)"><g filter="url(#c25)"><path d="M300 730 L520 650 L640 640 L700 800 L620 1000 L400 900 Z" fill="#423f31" opacity="0.6"/><path d="M60 1084 L140 960 L330 1084 Z" fill="#2f2d24" opacity="0.6"/><path d="M1600 1084 L1560 870 L1690 1084 Z" fill="#2e2c23" opacity="0.6"/></g></g>
<path d="M620.0 -80.0 C563.7 -72.0 584.0 -30.7 578.0 -20.0 C572.0 -9.3 579.5 -8.7 575.0 0.0 C570.5 8.7 551.3 31.1 544.0 45.0 C536.7 58.9 524.7 86.8 520.0 104.0 C515.3 121.2 509.5 155.3 509.0 174.0 C508.5 192.7 512.3 227.5 516.0 244.0 C519.7 260.5 530.5 283.5 537.0 298.0 C543.5 312.5 557.9 339.4 565.0 353.0 C572.1 366.6 572.0 391.1 590.0 400.0 C608.0 408.9 658.7 433.3 700.0 420.0 C741.3 406.7 849.3 321.3 900.0 300.0 C950.7 278.7 1053.9 279.1 1080.0 260.0 C1106.1 240.9 1094.1 173.5 1096.0 157.0 C1097.9 140.5 1096.5 145.3 1094.0 136.0 C1091.5 126.7 1083.0 100.1 1077.0 87.0 C1071.0 73.9 1049.9 47.7 1049.0 38.0 C1048.1 28.3 1070.5 19.7 1070.0 14.0 C1069.5 8.3 1049.0 -0.5 1045.0 -5.0 C1041.0 -9.5 1046.0 -10.0 1040.0 -20.0 C1034.0 -30.0 1056.0 -72.0 1000.0 -80.0 C944.0 -88.0 676.3 -88.0 620.0 -80.0 Z" fill="#3d3025" filter="url(#c1)"/>
<g clip-path="url(#p2hair)" filter="url(#c1)" fill="none" stroke-linecap="round">
<path d="M600 20 C560 80 540 150 545 240 M640 10 C590 60 560 130 560 200 M690 0 C640 30 600 70 580 110 M585 -5 C550 50 530 120 528 190 M535 200 C540 260 560 320 585 370" stroke="#6d563f" stroke-width="7" opacity="0.7"/>
<path d="M620 15 C575 70 550 140 552 220 M665 5 C615 45 580 100 570 160 M560 60 C535 120 525 180 530 250" stroke="#2e241b" stroke-width="6" opacity="0.7"/>
<path d="M900 -5 C960 20 1010 60 1050 120 M950 -5 C1000 20 1040 60 1075 120 M1000 -5 C1040 20 1060 50 1085 110" stroke="#2f251c" stroke-width="7" opacity="0.7"/>
<path d="M930 0 C985 25 1030 70 1065 135" stroke="#64503b" stroke-width="5" opacity="0.6"/>
</g>
<path d="M590.0 380.0 C580.3 370.7 564.5 363.3 557.0 364.0 C549.5 364.7 545.7 372.8 545.0 384.0 C544.3 395.2 547.8 414.0 553.0 431.0 C558.2 448.0 564.8 471.0 576.0 486.0 C587.2 501.0 607.5 512.2 620.0 521.0 C632.5 529.8 643.7 538.3 651.0 539.0 C658.3 539.7 665.8 536.5 664.0 525.0 C662.2 513.5 648.2 487.5 640.0 470.0 C631.8 452.5 623.3 435.0 615.0 420.0 C606.7 405.0 599.7 389.3 590.0 380.0 Z" fill="#d9a68e"/>
<path d="M1088.0 150.0 C1089.7 135.2 1095.8 141.8 1102.0 141.0 C1108.2 140.2 1117.2 137.2 1125.0 145.0 C1132.8 152.8 1144.3 171.7 1149.0 188.0 C1153.7 204.3 1153.7 222.0 1153.0 243.0 C1152.3 264.0 1148.3 297.0 1145.0 314.0 C1141.7 331.0 1138.5 338.7 1133.0 345.0 C1127.5 351.3 1117.5 359.5 1112.0 352.0 C1106.5 344.5 1103.3 320.3 1100.0 300.0 C1096.7 279.7 1094.0 255.0 1092.0 230.0 C1090.0 205.0 1086.3 164.8 1088.0 150.0 Z" fill="#e0b09a"/>
<g filter="url(#c6)"><path d="M570 390 C575 440 600 490 640 520" stroke="#b97f69" stroke-width="14" fill="none" opacity="0.8"/><path d="M1120 170 C1140 220 1135 290 1120 335" stroke="#c08a74" stroke-width="14" fill="none" opacity="0.8"/></g>
<path d="M780.0 -80.0 C768.3 -73.0 736.8 -29.3 730.0 -20.0 C723.2 -10.7 730.3 -4.8 722.0 0.0 C713.7 4.8 671.6 15.8 659.0 21.0 C646.4 26.2 623.0 38.1 614.0 45.0 C605.0 51.9 587.7 71.0 582.0 80.0 C576.3 89.0 567.5 111.0 565.0 122.0 C562.5 133.0 560.6 161.9 561.0 174.0 C561.4 186.1 566.4 213.6 568.0 226.0 C569.6 238.4 572.9 267.9 575.0 280.0 C577.1 292.1 583.5 319.3 586.0 330.0 C588.5 340.7 593.0 360.3 596.0 372.0 C599.0 383.7 607.8 416.2 612.0 430.0 C616.2 443.8 627.5 477.5 632.0 490.0 C636.5 502.5 647.0 530.1 651.0 537.0 C655.0 543.9 660.3 543.4 666.0 549.0 C671.7 554.6 692.4 578.1 700.0 585.0 C707.6 591.9 734.7 601.8 731.0 608.0 C727.3 614.2 676.3 629.7 668.0 638.0 C659.7 646.3 656.5 660.8 660.0 679.0 C663.5 697.2 688.4 762.4 698.0 794.0 C707.6 825.6 732.9 916.2 742.0 950.0 C751.1 983.8 770.2 1060.7 776.0 1084.0 C781.8 1107.3 754.9 1142.3 792.0 1150.0 C829.1 1157.7 1057.0 1157.7 1094.0 1150.0 C1131.0 1142.3 1101.5 1107.3 1109.0 1084.0 C1116.5 1060.7 1147.2 979.5 1158.0 950.0 C1168.8 920.5 1192.5 856.2 1202.0 831.0 C1211.5 805.8 1244.1 748.7 1239.0 734.0 C1233.9 719.3 1172.7 715.4 1158.0 705.0 C1143.3 694.6 1120.0 665.0 1113.0 645.0 C1106.0 625.0 1098.0 554.4 1098.0 534.0 C1098.0 513.6 1110.8 484.2 1113.0 470.0 C1115.2 455.8 1117.8 425.6 1117.0 412.0 C1116.2 398.4 1108.5 369.1 1106.0 353.0 C1103.5 336.9 1097.8 288.8 1096.0 274.0 C1094.2 259.2 1092.4 235.6 1091.0 226.0 C1089.6 216.4 1087.3 201.3 1084.0 192.0 C1080.7 182.7 1068.7 156.3 1063.0 146.0 C1057.3 135.7 1043.2 115.0 1035.0 104.0 C1026.8 93.0 1003.1 61.7 993.0 52.0 C982.9 42.3 961.3 27.1 948.0 21.0 C934.7 14.9 888.1 4.8 879.0 0.0 C869.9 -4.8 875.7 -10.7 870.0 -20.0 C864.3 -29.3 840.5 -73.0 830.0 -80.0 C819.5 -87.0 791.7 -87.0 780.0 -80.0 Z" fill="#d8ad96" filter="url(#c1)"/>
<g clip-path="url(#p2skin)">
<g filter="url(#c50)">
<ellipse cx="800" cy="130" rx="200" ry="110" fill="#ead0c1"/>
<ellipse cx="920" cy="900" rx="190" ry="200" fill="#e2c0af"/>
<ellipse cx="1100" cy="820" rx="70" ry="220" fill="#c79e8b"/>
<ellipse cx="700" cy="760" rx="50" ry="160" fill="#d0a794"/>
</g>
<g filter="url(#c25)">
<ellipse cx="700" cy="440" rx="70" ry="60" fill="#d09e8d" opacity="0.9"/>
<ellipse cx="1030" cy="330" rx="60" ry="70" fill="#d3a392" opacity="0.9"/>
<ellipse cx="640" cy="330" rx="40" ry="120" fill="#c49884" opacity="0.8" transform="rotate(-20 640 330)"/>
<ellipse cx="1095" cy="300" rx="25" ry="150" fill="#c39783" opacity="0.8"/>
<path d="M650 530 C680 570 740 615 816 630 C870 640 960 625 1042 584 C1075 565 1090 540 1096 515 L1105 640 C1000 700 800 700 720 640 Z" fill="#a87b67" opacity="0.85"/>
<ellipse cx="700" cy="560" rx="70" ry="110" fill="#b98c79" opacity="0.8" transform="rotate(-35 700 560)"/>
<ellipse cx="900" cy="720" rx="190" ry="60" fill="#c99f8b" opacity="0.7"/>
<ellipse cx="820" cy="300" rx="45" ry="80" fill="#ecd5c8" opacity="0.8" transform="rotate(-20 820 300)"/>
<ellipse cx="860" cy="570" rx="100" ry="40" fill="#e6cabb" opacity="0.8" transform="rotate(-15 860 570)"/>
<ellipse cx="700" cy="305" rx="70" ry="32" fill="#caa08f" opacity="0.7" transform="rotate(-20 700 305)"/>
<ellipse cx="925" cy="222" rx="70" ry="32" fill="#caa08f" opacity="0.7" transform="rotate(-20 925 222)"/>
</g>
<g filter="url(#c12)">
<ellipse cx="860" cy="375" rx="62" ry="34" fill="#cf9f8b" opacity="0.9" transform="rotate(-20 860 375)"/>
<ellipse cx="846" cy="345" rx="22" ry="26" fill="#ecd2c4" opacity="0.9"/>
<path d="M790 300 C800 340 800 370 806 395" stroke="#c59a87" stroke-width="14" fill="none" opacity="0.7"/>
<path d="M735 640 C750 700 765 750 775 790" stroke="#c39985" stroke-width="12" fill="none" opacity="0.6"/>
</g>
<rect width="1704" height="1084" fill="#fff" filter="url(#frk)" opacity="0.55"/>
</g>
<g filter="url(#c3)" fill="none" stroke="#8f6a54" stroke-linecap="round">
<path d="M610 276 C650 240 700 220 752 214" stroke-width="13" opacity="0.8"/>
<path d="M845 166 C890 146 950 138 996 150" stroke-width="11" opacity="0.75"/>
</g>
<g transform="translate(710 294) rotate(-21)" filter="url(#c1)">
<clipPath id="p2eye0"><path d="M-56 6 C-30 -17 24 -20 56 -2 C28 15 -28 18 -56 6 Z"/></clipPath>
<path d="M-62 8 C-30 -30 30 -32 64 -6 C30 26 -30 28 -62 8 Z" fill="#c79c8b" opacity="0.55" filter="url(#c6)"/>
<path d="M-56 6 C-30 -17 24 -20 56 -2 C28 15 -28 18 -56 6 Z" fill="#c9b8b2"/>
<g clip-path="url(#p2eye0)"><circle cx="4" cy="-3" r="21" fill="#44596f"/><circle cx="4" cy="-3" r="21" fill="none" stroke="#34465c" stroke-width="4"/><circle cx="4" cy="-4" r="8" fill="#15161c"/><circle cx="-2" cy="-9" r="3" fill="#dfe6ee" opacity="0.8"/></g>
<path d="M-60 8 C-30 -21 26 -24 60 -3" stroke="#46302a" stroke-width="6" fill="none"/>
<path d="M-54 9 C-24 21 28 19 54 1" stroke="#a07868" stroke-width="3" fill="none" opacity="0.8"/>
<path d="M-60 -8 C-28 -38 30 -40 66 -14" stroke="#b48b79" stroke-width="4" fill="none" opacity="0.8"/>
</g>
<g transform="translate(921 214) rotate(-21)" filter="url(#c1)">
<clipPath id="p2eye1"><path d="M-56 6 C-30 -17 24 -20 56 -2 C28 15 -28 18 -56 6 Z"/></clipPath>
<path d="M-62 8 C-30 -30 30 -32 64 -6 C30 26 -30 28 -62 8 Z" fill="#c79c8b" opacity="0.55" filter="url(#c6)"/>
<path d="M-56 6 C-30 -17 24 -20 56 -2 C28 15 -28 18 -56 6 Z" fill="#c9b8b2"/>
<g clip-path="url(#p2eye1)"><circle cx="4" cy="-3" r="21" fill="#44596f"/><circle cx="4" cy="-3" r="21" fill="none" stroke="#34465c" stroke-width="4"/><circle cx="4" cy="-4" r="8" fill="#15161c"/><circle cx="-2" cy="-9" r="3" fill="#dfe6ee" opacity="0.8"/></g>
<path d="M-60 8 C-30 -21 26 -24 60 -3" stroke="#46302a" stroke-width="6" fill="none"/>
<path d="M-54 9 C-24 21 28 19 54 1" stroke="#a07868" stroke-width="3" fill="none" opacity="0.8"/>
<path d="M-60 -8 C-28 -38 30 -40 66 -14" stroke="#b48b79" stroke-width="4" fill="none" opacity="0.8"/>
</g>
<g filter="url(#c6)">
<path d="M806 352 C796 372 800 392 818 402" stroke="#b98a78" stroke-width="9" fill="none" opacity="0.8"/>
<path d="M908 320 C922 338 920 360 906 372" stroke="#c09382" stroke-width="8" fill="none" opacity="0.75"/>
<ellipse cx="818" cy="380" rx="16" ry="14" fill="#d9ab99" opacity="0.8"/>
<ellipse cx="852" cy="362" rx="30" ry="24" fill="#e3bba9" opacity="0.8"/>
</g>
<g filter="url(#c3)"><ellipse cx="832" cy="389" rx="14" ry="8" fill="#63392f" transform="rotate(-28 832 389)"/><ellipse cx="888" cy="368" rx="13" ry="7" fill="#6e4338" transform="rotate(-12 888 368)"/><path d="M802 382 C808 402 826 410 850 405 C874 400 902 388 914 366" stroke="#ae7c69" stroke-width="6" fill="none" opacity="0.85"/></g>
<g filter="url(#c6)"><path d="M790 420 C786 450 792 480 802 500" stroke="#c49684" stroke-width="8" fill="none" opacity="0.6"/><path d="M960 360 C990 380 1000 410 996 430" stroke="#c49684" stroke-width="8" fill="none" opacity="0.6"/></g>
<g filter="url(#c1)">
<path d="M804.0 498.0 C803.5 495.6 827.2 480.7 836.0 474.0 C844.8 467.3 861.7 454.1 870.0 448.0 C878.3 441.9 891.6 430.1 898.0 428.0 C904.4 425.9 912.4 432.5 918.0 432.0 C923.6 431.5 930.4 425.3 940.0 424.0 C949.6 422.7 987.3 420.4 990.0 422.0 C992.7 423.6 968.0 432.5 960.0 436.0 C952.0 439.5 939.1 444.0 930.0 448.0 C920.9 452.0 900.5 462.0 892.0 466.0 C883.5 470.0 872.9 474.5 866.0 478.0 C859.1 481.5 848.3 489.3 840.0 492.0 C831.7 494.7 804.5 500.4 804.0 498.0 Z" fill="#a8705f"/>
<path d="M804.0 498.0 C804.0 495.6 831.7 494.7 840.0 492.0 C848.3 489.3 859.1 481.5 866.0 478.0 C872.9 474.5 883.5 470.0 892.0 466.0 C900.5 462.0 920.9 452.0 930.0 448.0 C939.1 444.0 952.0 439.5 960.0 436.0 C968.0 432.5 989.3 418.5 990.0 422.0 C990.7 425.5 973.0 452.4 965.0 462.0 C957.0 471.6 941.1 487.5 930.0 494.0 C918.9 500.5 894.0 508.9 882.0 511.0 C870.0 513.1 850.4 511.7 840.0 510.0 C829.6 508.3 804.0 500.4 804.0 498.0 Z" fill="#bd8677"/>
<path d="M804 498 C840 492 866 478 892 466 C930 448 960 436 990 422" stroke="#8a5a50" stroke-width="3.5" fill="none"/>
</g>
<g filter="url(#c6)"><path d="M830 512 C870 526 920 510 950 480" stroke="#b98f80" stroke-width="8" fill="none" opacity="0.7"/><ellipse cx="880" cy="488" rx="40" ry="9" fill="#d9aea3" opacity="0.7" transform="rotate(-22 880 488)"/></g>
<circle cx="1119" cy="349" r="11" fill="#c98a2c"/>
<path d="M1121 372 L1137 369 Q1158 420 1161 486 L1110 493 Q1108 430 1121 372 Z" fill="#c58a35"/>
<g fill="#28241f"><path d="M1124 378 L1136 376 L1142 400 L1150 420 L1132 428 L1124 410 Z"/><path d="M1112 452 L1132 450 L1134 480 L1111 484 Z"/><path d="M1140 440 L1152 436 L1156 456 L1144 460 Z" opacity="0.7"/></g>
<circle cx="658" cy="543" r="7" fill="none" stroke="#8a6238" stroke-width="2.5"/>
<path d="M654 556 Q661 548 668 556 L664 668 Q657 678 650 668 Z" fill="#9a6a22" stroke="#5e3f18" stroke-width="2.5"/><path d="M660 560 L656 664" stroke="#c08a30" stroke-width="3" opacity="0.8"/>
</svg><!--/PHOTO2-->
    <div class="name" id="n2"><span id="n2s">Sincerely Media</span></div>
  </div>

  <div class="toolbar">
    <!--ICONS_START--><svg width="3494" height="160" viewBox="256 2336 3494 160">
  <g fill="#dcddde">
    <!-- mic -->
    <rect x="362" y="2381" width="29" height="49.4" rx="14.5"/>
    <path d="M356.5 2411.5 V2416 A20.2 20.2 0 0 0 396.9 2416 V2411.5" fill="none" stroke="#dcddde" stroke-width="2.6" stroke-linecap="round"/>
    <path d="M376.6 2436.5 V2449.2 M364.4 2449.2 H389" fill="none" stroke="#dcddde" stroke-width="2.6"/>
    <path d="M340.2 2452.6 L412.9 2380.4" fill="none" stroke="#1b1f20" stroke-width="5.4" stroke-linecap="butt"/>
    <path d="M340.2 2452.6 L412.9 2380.4" fill="none" stroke="#d8596b" stroke-width="2.4" stroke-linecap="round"/>
    <!-- camera -->
    <path d="M585 2394 H623.2 A9.5 9.5 0 0 1 632.7 2403.5 V2432 A5.2 5.2 0 0 1 627.5 2437.2 H589.5 A9.6 9.6 0 0 1 579.9 2427.6 V2399.1 A5.1 5.1 0 0 1 585 2394 Z"/>
    <path d="M634.8 2405.6 L649.4 2397.6 Q652.1 2396.4 652.1 2399.4 V2432 Q652.1 2435 649.4 2433.8 L634.8 2424.2 Z"/>
    <!-- shield -->
    <path d="M1404.6 2384 C1397 2392.5 1387 2397.3 1376.2 2398.4 C1375.2 2426 1386 2443 1404.6 2450.2 C1423.2 2443 1434.6 2426 1433.6 2398.4 C1422.6 2397.3 1412.2 2392.5 1404.6 2384 Z"/>
    <path d="M1404.6 2390.3 C1411.5 2396.6 1420 2400.8 1429.6 2402.4 C1429.8 2407.5 1429.6 2412.5 1428.7 2417.2 H1404.6 Z" fill="#1b1f20"/>
    <path d="M1404.6 2417.2 V2445.7 C1391.5 2440.5 1382.6 2430.5 1380.4 2417.2 Z" fill="#1b1f20"/>
    <!-- participants -->
    <circle cx="1631.4" cy="2400.5" r="12.7"/>
    <circle cx="1661.8" cy="2406.3" r="12.6"/>
    <path d="M1626 2420.2 H1638 C1648 2420.2 1654.8 2428 1654.8 2436 C1654.8 2440 1652.5 2442 1649 2442 H1613.5 C1610 2442 1607.9 2440 1607.9 2436 C1607.9 2428 1615 2420.2 1626 2420.2 Z"/>
    <path d="M1654.6 2425 H1666 C1675.5 2425 1680.8 2430.5 1680.8 2436.5 C1680.8 2440.3 1678.8 2442 1675.5 2442 H1656.2 C1658.3 2439.5 1658.6 2436.5 1658.1 2433.5 C1657.6 2430.3 1656.4 2427.5 1654.6 2425 Z"/>
    <!-- chat -->
    <path d="M1862.9 2387.7 H1904.2 A11 11 0 0 1 1915.2 2398.7 V2421.9 A11 11 0 0 1 1904.2 2432.9 H1880.3 L1869.6 2444.6 Q1867.2 2446.8 1865.2 2445.2 Q1864 2444.2 1863.9 2442.2 L1863.2 2432.9 A11 11 0 0 1 1851.9 2421.9 V2398.7 A11 11 0 0 1 1862.9 2387.7 Z"/>
    <!-- share -->
    <rect x="2086" y="2387.7" width="74.9" height="56.5" rx="11" fill="#4fc322"/>
    <path d="M2122 2427 V2403.4 M2114 2410.6 L2122 2402.6 L2130 2410.6" fill="none" stroke="#16200f" stroke-width="4" stroke-linecap="round" stroke-linejoin="miter"/>
    <!-- record -->
    <circle cx="2363.1" cy="2415.1" r="28.1" fill="none" stroke="#dcddde" stroke-width="6.2"/>
    <circle cx="2363.1" cy="2415.1" r="22.3"/>
    <!-- reactions -->
    <circle cx="2602.2" cy="2417.7" r="28.2"/>
    <circle cx="2594.6" cy="2413.7" r="3.2" fill="#1b1f20"/>
    <circle cx="2609" cy="2413.7" r="3.2" fill="#1b1f20"/>
    <path d="M2590.2 2422.2 A12.2 12.2 0 0 0 2613.3 2422.2" fill="none" stroke="#1b1f20" stroke-width="3" stroke-linecap="round"/>
    <path d="M2624.5 2385.6 V2404 M2615.4 2395 H2634" fill="none" stroke="#1b1f20" stroke-width="9" stroke-linecap="round"/>
    <path d="M2624.5 2385.6 V2404 M2615.4 2395 H2633.8" fill="none" stroke="#dcddde" stroke-width="3.5" stroke-linecap="round"/>
  </g>
</svg><!--ICONS_END-->
    <div class="end" id="end" style="left:3174.5px">End Meeting</div>
  </div>
</div>
</body>
</html>
